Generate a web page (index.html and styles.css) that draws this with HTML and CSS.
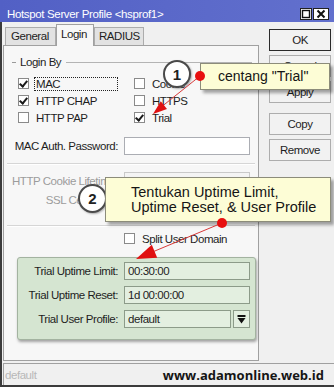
FILE: index.html
```html
<!DOCTYPE html>
<html lang="en">

<head>
    <meta charset="UTF-8">
    <meta name="viewport" content="width=device-width, initial-scale=1.0">
    <title>Hotspot Server Profile</title>
    <link rel="stylesheet" href="styles.css">
</head>

<body>
    <div class="window">
        <div class="titlebar">
            <span class="title">Hotspot Server Profile &lt;hsprof1&gt;</span>
            <div class="winbtns">
                <span class="wb max"><svg width="10" height="10" viewBox="0 0 10 10"><rect x="1.5" y="1.5" width="7" height="7" fill="none" stroke="#111" stroke-width="1.4"/></svg></span>
                <span class="wb close"><svg width="14" height="10" viewBox="0 0 14 10"><path d="M3.5 1.5 L10.5 8.5 M10.5 1.5 L3.5 8.5" stroke="#111" stroke-width="2"/></svg></span>
            </div>
        </div>

        <div class="frame">
            <div class="main">
                <div class="left">
                    <div class="tabs">
                        <div class="tab tab-general">General</div>
                        <div class="tab tab-login active">Login</div>
                        <div class="tab tab-radius">RADIUS</div>
                    </div>

                    <div class="panel">
                        <div class="group-head">
                            <span class="dash"></span>
                            <span class="head-text">Login By</span>
                            <span class="head-line"></span>
                        </div>

                        <div class="checks">
                            <div class="check"><span class="box on"></span><span class="check-label focus">MAC</span></div>
                            <div class="check"><span class="box"></span><span class="check-label">Cookie</span></div>
                            <div class="check"><span class="box on"></span><span class="check-label">HTTP CHAP</span></div>
                            <div class="check"><span class="box"></span><span class="check-label">HTTPS</span></div>
                            <div class="check"><span class="box"></span><span class="check-label">HTTP PAP</span></div>
                            <div class="check"><span class="box on"></span><span class="check-label">Trial</span></div>
                        </div>

                        <div class="field-row row-mac">
                            <label>MAC Auth. Password:</label>
                            <div class="input"></div>
                        </div>

                        <div class="sep"></div>

                        <div class="field-row row-cookie disabled">
                            <label>HTTP Cookie Lifetime:</label>
                            <div class="input">3d 00:00:00</div>
                        </div>
                        <div class="field-row row-ssl disabled">
                            <label>SSL Certificate:</label>
                            <div class="input">none</div>
                        </div>

                        <div class="sep sep-2"></div>

                        <div class="check split"><span class="box"></span><span class="check-label">Split User Domain</span></div>

                        <div class="trial-group">
                            <div class="field-row">
                                <label>Trial Uptime Limit:</label>
                                <div class="input">00:30:00</div>
                            </div>
                            <div class="field-row">
                                <label>Trial Uptime Reset:</label>
                                <div class="input">1d 00:00:00</div>
                            </div>
                            <div class="field-row">
                                <label>Trial User Profile:</label>
                                <div class="combo">
                                    <div class="input">default</div>
                                    <span class="drop"><svg width="9" height="9" viewBox="0 0 9 9"><rect x="0.5" y="0" width="8" height="2" fill="#111"/><path d="M0.5 3 L8.5 3 L4.5 8.5 Z" fill="#111"/></svg></span>
                                </div>
                            </div>
                        </div>
                    </div>
                </div>

                <div class="buttons">
                    <div class="btn default">OK</div>
                    <div class="btn">Cancel</div>
                    <div class="btn">Apply</div>
                    <div class="btn btn-copy">Copy</div>
                    <div class="btn">Remove</div>
                </div>
            </div>

            <div class="status">
                <span class="status-text">default</span>
                <span class="site">www.adamonline.web.id</span>
            </div>
        </div>

        <!-- annotations drawn over the dialog -->
        <div class="num n1">1</div>
        <div class="num n2">2</div>
        <div class="callout c1">centang "Trial"</div>
        <div class="callout c2">Tentukan Uptime Limit,<br>Uptime Reset, &amp; User Profile</div>

        <svg class="marks" width="334" height="387" viewBox="0 0 334 387">
            <line x1="200" y1="76" x2="160" y2="108" stroke="#d83a3a" stroke-width="1"/>
            <polygon points="153,114 167,109.1 160.8,101.3" fill="#e01010"/>
            <circle cx="200" cy="76" r="5" fill="#e80f0f"/>
            <line x1="222" y1="223" x2="150" y2="253" stroke="#d83a3a" stroke-width="1"/>
            <polygon points="136,259 157.2,257.8 151.8,244.8" fill="#e01010"/>
            <circle cx="222" cy="223" r="5" fill="#e80f0f"/>
        </svg>
    </div>
</body>

</html>
```

FILE: styles.css
```css
body {
    margin: 0;
    background: #fff;
    font-family: "Liberation Sans", Arial, sans-serif;
    font-size: 11.5px;
    letter-spacing: -0.45px;
    color: #1e1e1e;
}

.window {
    position: relative;
    width: 334px;
    height: 387px;
    background: #f0f0f0;
    overflow: hidden;
}

.titlebar {
    display: flex;
    height: 22px;
    background: linear-gradient(to right, #5260c5, #6270cd);
    color: #fff;
}

.title {
    padding: 8px 0 0 7px;
    line-height: 13px;
    font-size: 11.5px;
    letter-spacing: -0.35px;
}

.winbtns {
    display: flex;
    gap: 1px;
    margin-left: auto;
    padding: 8px 5px 0 0;
}

.wb {
    display: flex;
    align-items: center;
    justify-content: center;
    height: 12px;
    box-sizing: border-box;
    border: 1px solid #222;
    background: #fff;
}

.wb.max {
    width: 12px;
}

.wb.close {
    width: 16px;
}

.frame {
    height: 363px;
    border-left: 2px solid #3b3b3b;
    border-bottom: 2px solid #3b3b3b;
}

.main {
    display: flex;
    height: 341px;
}

.left {
    display: flex;
    flex-direction: column;
    width: 256px;
    margin-left: 1px;
}

.tabs {
    display: flex;
    align-items: flex-end;
    height: 23px;
    padding-left: 2px;
}

.tab {
    height: 18px;
    box-sizing: border-box;
    padding-left: 4px;
    border: 1px solid #acacac;
    border-bottom: none;
    background: #e2e2e2;
    line-height: 17px;
}

.tab-general {
    width: 51px;
    padding-left: 5px;
}

.tab-login {
    width: 38px;
}

.tab-radius {
    width: 50px;
}

.tab.active {
    position: relative;
    z-index: 1;
    height: 22px;
    margin-bottom: -1px;
    background: #f7f7f7;
    border-color: #a0a0a0;
    line-height: 19px;
}

.panel {
    height: 316px;
    box-sizing: border-box;
    border: 1px solid #a0a0a0;
    background: #f7f7f7;
}

.group-head {
    display: flex;
    align-items: center;
    height: 14px;
    margin: 9px 6px 0 8px;
}

.dash {
    width: 4px;
    height: 1px;
    background: #9a9a9a;
}

.head-text {
    margin: 0 5px 0 4px;
}

.head-line {
    flex: 1;
    height: 1px;
    background: #b4b4b4;
}

.checks {
    display: grid;
    grid-template-columns: 116px 1fr;
    grid-auto-rows: 17px;
    margin: 6px 0 0 14px;
}

.check {
    display: flex;
    align-items: center;
    gap: 5px;
}

.box {
    position: relative;
    width: 11px;
    height: 11px;
    box-sizing: border-box;
    border: 1px solid #8a8a8a;
    background: #fff;
}

.box.on::after {
    content: "";
    position: absolute;
    left: 2px;
    top: 0;
    width: 3px;
    height: 6px;
    border: solid #1a1a1a;
    border-width: 0 2px 2px 0;
    transform: rotate(40deg);
}

.check-label {
    height: 14px;
    box-sizing: border-box;
    padding-left: 1px;
    border: 1px solid transparent;
    line-height: 12px;
}

.check-label.focus {
    width: 84px;
    border: 1px dotted #222;
}

.field-row {
    display: grid;
    grid-template-columns: 114px 126px;
    column-gap: 6px;
    align-items: center;
    height: 18px;
}

.field-row label {
    text-align: right;
    white-space: nowrap;
}

.input {
    height: 18px;
    box-sizing: border-box;
    padding-left: 3px;
    border: 1px solid #abadb3;
    background: #fff;
    line-height: 16px;
}

.row-mac {
    margin-top: 11px;
}

.sep {
    height: 1px;
    margin: 8px 3px 0;
    background: #d6d6d6;
    border-bottom: 1px solid #fff;
}

.sep-2 {
    margin-top: 16px;
}

.row-cookie {
    margin-top: 7px;
}

.row-ssl {
    margin-top: 1px;
}

.disabled label {
    color: #9c9c9c;
}

.disabled .input {
    border-color: #c9c9c9;
    background: #f4f4f4;
    color: #444;
}

.split {
    height: 17px;
    margin: 3px 0 0 120px;
}

.trial-group {
    display: flex;
    flex-direction: column;
    gap: 6px;
    width: 239px;
    box-sizing: border-box;
    margin: 10px 0 0 13px;
    padding: 4px 0 11px;
    border: 1px solid #a3b3a0;
    border-radius: 3px;
    background: #d5e5d1;
    box-shadow: 1px 2px 3px rgba(0, 0, 0, 0.35);
}

.trial-group .field-row {
    grid-template-columns: 100px 126px;
}

.trial-group .input {
    border-color: #8c9b89;
    background: #e3efe0;
}

.combo {
    display: flex;
    gap: 2px;
}

.combo .input {
    flex: 1;
}

.drop {
    display: flex;
    align-items: center;
    justify-content: center;
    width: 17px;
    height: 18px;
    box-sizing: border-box;
    border: 1px solid #8c9b89;
    background: #e3efe0;
}

.buttons {
    display: flex;
    flex-direction: column;
    gap: 4px;
    width: 62px;
    margin-left: 10px;
    padding-top: 7px;
}

.btn {
    height: 22px;
    box-sizing: border-box;
    border: 1px solid #adadad;
    background: #f2f2f2;
    text-align: center;
    line-height: 20px;
}

.btn.default {
    border-color: #2a2a2a;
}

.btn-copy {
    margin-top: 6px;
}

.status {
    display: flex;
    align-items: center;
    height: 22px;
    box-sizing: border-box;
    margin-left: 1px;
    border-top: 1px solid #a0a0a0;
    border-left: 1px solid #a0a0a0;
}

.status-text {
    padding-left: 1px;
    color: #b8b8b8;
}

.site {
    margin-left: auto;
    padding-right: 10px;
    font-family: "Open Sans", sans-serif;
    font-size: 13px;
    font-weight: bold;
    letter-spacing: 0;
    color: #151515;
}

/* annotations */
.num {
    position: absolute;
    display: flex;
    align-items: center;
    justify-content: center;
    width: 28px;
    height: 28px;
    box-sizing: border-box;
    border: 2px solid #4a4a4a;
    border-radius: 50%;
    background: #fff;
    font-size: 15px;
    font-weight: bold;
    letter-spacing: 0;
    color: #222;
    box-shadow: 1px 1px 2px rgba(0, 0, 0, 0.3);
}

.n1 {
    left: 163px;
    top: 60px;
}

.n2 {
    left: 78px;
    top: 184px;
    width: 29px;
    height: 29px;
}

.callout {
    position: absolute;
    box-sizing: border-box;
    border: 1px solid #8c8c7a;
    background: #fdfdd6;
    box-shadow: 3px 3px 3px rgba(0, 0, 0, 0.35);
    font-size: 14px;
    letter-spacing: 0;
    color: #151515;
    white-space: nowrap;
}

.c1 {
    left: 200px;
    top: 63px;
    width: 130px;
    height: 27px;
    padding-left: 17px;
    line-height: 25px;
}

.c2 {
    left: 105px;
    top: 177px;
    width: 226px;
    height: 45px;
    padding: 7px 0 0 25px;
    font-size: 14.5px;
    line-height: 15px;
}

.marks {
    position: absolute;
    left: 0;
    top: 0;
    pointer-events: none;
}
```
